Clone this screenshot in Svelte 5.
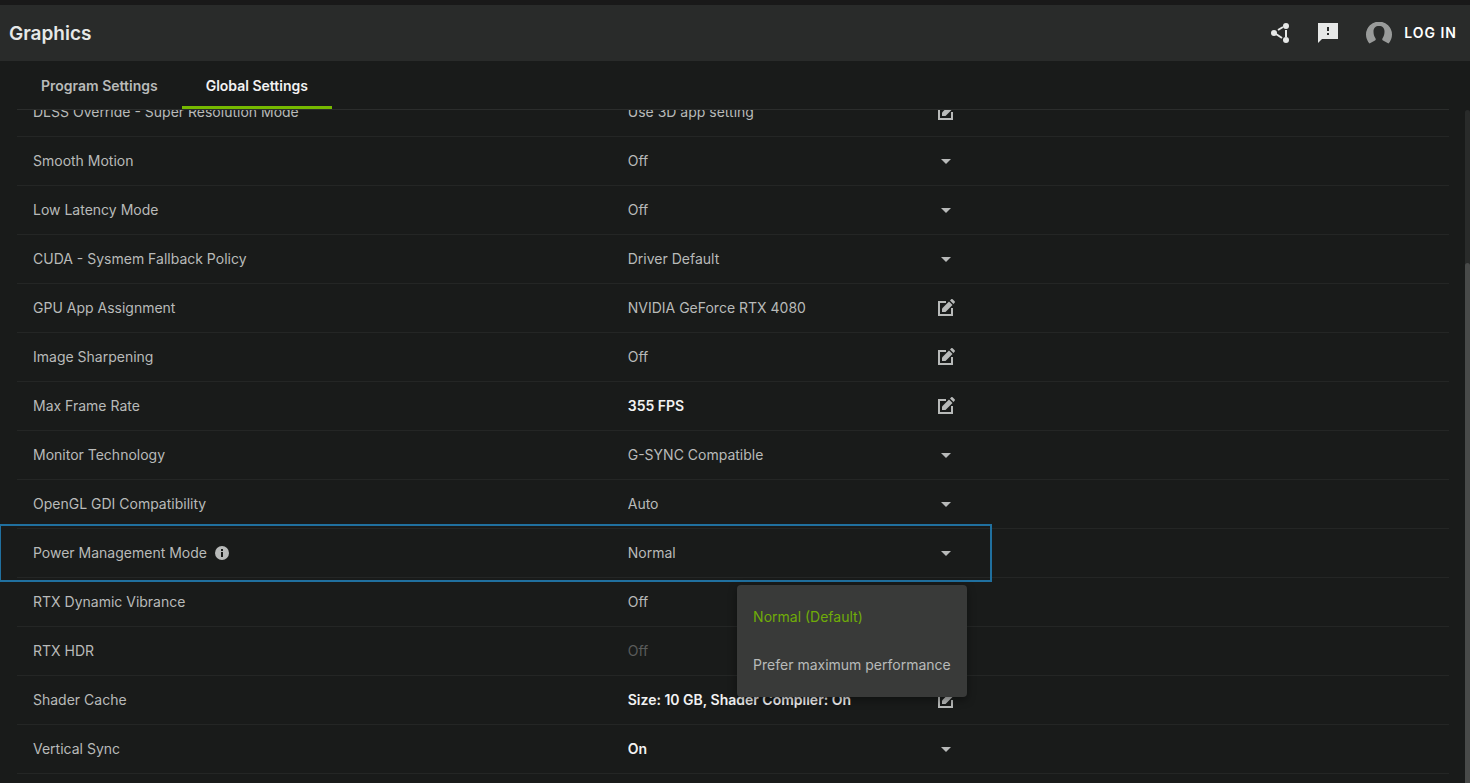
<script>
  let tab = $state("global");

  const settings = [
    { id: "dlss", label: "DLSS Override - Super Resolution Mode", value: "Use 3D app setting", edit: true },
    { id: "smooth", label: "Smooth Motion", value: "Off" },
    { id: "latency", label: "Low Latency Mode", value: "Off" },
    { id: "cuda", label: "CUDA - Sysmem Fallback Policy", value: "Driver Default" },
    { id: "gpu", label: "GPU App Assignment", value: "NVIDIA GeForce RTX 4080", edit: true },
    { id: "sharpen", label: "Image Sharpening", value: "Off", edit: true },
    { id: "fps", label: "Max Frame Rate", value: "355 FPS", edit: true, changed: true },
    { id: "monitor", label: "Monitor Technology", value: "G-SYNC Compatible" },
    { id: "opengl", label: "OpenGL GDI Compatibility", value: "Auto" },
    { id: "power", label: "Power Management Mode", value: "Normal", info: true, open: true },
    { id: "vibrance", label: "RTX Dynamic Vibrance", value: "Off", plain: true },
    { id: "hdr", label: "RTX HDR", value: "Off", plain: true, disabled: true },
    { id: "shader", label: "Shader Cache", value: "Size: 10 GB, Shader Compiler: On", edit: true, changed: true },
    { id: "vsync", label: "Vertical Sync", value: "On", changed: true }
  ];
</script>

<div class="app">
  <header>
    <h1>Graphics</h1>
    <div class="actions">
      <button aria-label="Share">
        <svg width="20" height="22" viewBox="0 0 20 22">
          <path d="M8 8 13 5M6 12l6 4M16 8v7" fill="none" stroke="currentColor" stroke-width="2" />
          <circle cx="4" cy="11" r="3" fill="currentColor" />
          <circle cx="16" cy="4" r="3" fill="currentColor" />
          <circle cx="16" cy="18" r="3" fill="currentColor" />
        </svg>
      </button>
      <button aria-label="Send feedback">
        <svg width="20" height="20" viewBox="0 0 20 20">
          <path d="M0 0h20v16H4l-4 4zM9 4v4h2V4zm0 6v2h2v-2z" fill="currentColor" fill-rule="evenodd" />
        </svg>
      </button>
      <button class="login">
        <svg width="26" height="22" viewBox="0 0 26 22">
          <path
            d="M3.5 21.5A13 13 0 1 1 22.5 21.5L17 18.5c-1-.5-1-1.500-.3-2.500C18 14 18.500 12 18.500 9.500 18.500 6 16.500 4 13 4S7.500 6 7.500 9.500c0 2.500.5 4.500 1.800 6.500.7 1 .7 2-.3 2.500z"
            fill="#999b9a"
          />
        </svg>
        <span>LOG IN</span>
      </button>
    </div>
  </header>

  <nav>
    <button class:active={tab === "program"} onclick={() => (tab = "program")}>Program Settings</button>
    <button class:active={tab === "global"} onclick={() => (tab = "global")}>Global Settings</button>
  </nav>

  <main>
    <div class="list">
      {#each settings as s (s.id)}
        <div class="row">
          <div class="name">
            <label for={s.id}>{s.label}</label>
            {#if s.info}
              <svg width="14" height="14" viewBox="0 0 14 14">
                <circle cx="7" cy="7" r="7" fill="currentColor" />
                <path d="M6 3h2v2H6zM6 6h2v5H6z" fill="#191b1a" />
              </svg>
            {/if}
          </div>

          <div class="value" class:changed={s.changed} class:disabled={s.disabled}>
            {#if s.edit}
              <output id={s.id}>{s.value}</output>
              <button class="edit" aria-label="Edit {s.label}">
                <svg width="18" height="18" viewBox="0 0 18 18">
                  <path d="M9 3H2v13h13V9" fill="none" stroke="currentColor" stroke-width="2" />
                  <path d="M5 13v-3.500L12 2.500 15.500 6l-7 7z" fill="currentColor" />
                  <path d="m13 1.500 1.200-1.200a1 1 0 0 1 1.400 0l2 2a1 1 0 0 1 0 1.400L16.500 5z" fill="currentColor" />
                </svg>
              </button>
            {:else if s.plain}
              <output id={s.id}>{s.value}</output>
            {:else}
              <select id={s.id}>
                <option>{s.value}</option>
              </select>
              <svg class="arrow" width="10" height="5" viewBox="0 0 10 5">
                <path d="M0 0h10L5 5z" fill="currentColor" />
              </svg>
            {/if}
          </div>

          {#if s.open}
            <div class="highlight"></div>
            <div class="menu">
              <button class="selected">Normal (Default)</button>
              <button>Prefer maximum performance</button>
            </div>
          {/if}
        </div>
      {/each}
    </div>
    <div class="scrollbar"><div class="thumb"></div></div>
  </main>
</div>

<style>
  :global(body) {
    margin: 0;
    background: #191b1a;
  }

  .app {
    display: flex;
    flex-direction: column;
    height: 100vh;
    overflow: hidden;
    box-sizing: border-box;
    border-top: 5px solid #191919;
    color: #b8bab9;
    font: 14px/20px Inter, "Liberation Sans", sans-serif;
  }

  button,
  select {
    border: 0;
    padding: 0;
    background: none;
    color: inherit;
    font: inherit;
    cursor: pointer;
  }

  svg {
    display: block;
    flex: none;
  }

  header {
    display: flex;
    flex: none;
    align-items: center;
    justify-content: space-between;
    height: 56px;
    padding: 0 13px 0 9px;
    background: #292b2a;
    color: #e6e8e7;
  }

  h1 {
    margin: 0;
    padding-top: 2px;
    font-size: 19px;
    font-weight: 600;
    line-height: 24px;
  }

  .actions {
    display: flex;
    align-items: center;
    gap: 28px;
  }

  .login {
    display: flex;
    align-items: center;
    gap: 12px;
    color: #fff;
    font-weight: 600;
    letter-spacing: 1px;
  }

  nav {
    display: flex;
    flex: none;
    height: 48px;
    margin: 0 21px 0 17px;
    border-bottom: 1px solid #2b2d2c;
  }

  nav button {
    box-sizing: border-box;
    padding: 4px 24px 0;
    border-bottom: 3px solid transparent;
    font-weight: 600;
  }

  nav .active {
    border-color: #76b900;
    color: #f2f2f2;
  }

  main {
    display: flex;
    flex: 1;
    min-height: 0;
    overflow: hidden;
  }

  .list {
    flex: 1;
    margin-top: -22px;
    padding: 0 16px 0 17px;
  }

  .row {
    position: relative;
    display: grid;
    grid-template-columns: 42% 328px 1fr;
    align-items: center;
    height: 48px;
    padding-left: 16px;
    border-bottom: 1px solid #242625;
  }

  .name {
    display: flex;
    align-items: center;
    gap: 8px;
  }

  .value {
    display: flex;
    align-items: center;
    justify-content: space-between;
  }

  .changed {
    color: #f2f2f2;
    font-weight: 600;
  }

  .disabled {
    color: #5a5c5b;
  }

  .edit {
    margin-right: 1px;
    color: #b8bab9;
  }

  select {
    flex: 1;
    height: 32px;
    appearance: none;
    outline: none;
  }

  .arrow {
    margin-right: 5px;
    color: #b8bab9;
    pointer-events: none;
  }

  .highlight {
    position: absolute;
    grid-column: 1 / 3;
    inset: -5px -36px -5px -33px;
    border: 2px solid #20709f;
    border-left-width: 1px;
    pointer-events: none;
  }

  .menu {
    position: absolute;
    z-index: 1;
    grid-column: 2 / 3;
    top: 56px;
    right: -11px;
    padding: 8px 0;
    border-radius: 4px;
    background: #393a39;
    box-shadow: 0 3px 8px rgba(0, 0, 0, 0.4);
  }

  .menu button {
    display: block;
    width: 100%;
    height: 48px;
    padding: 0 16px;
    text-align: left;
    white-space: nowrap;
  }

  .menu .selected {
    color: #70ac08;
  }

  .scrollbar {
    width: 5px;
    border-radius: 3px 3px 0 0;
    background: #292b2a;
  }

  .thumb {
    height: 100%;
    margin-top: 153px;
    border-radius: 3px;
    background: #484a49;
  }
</style>
